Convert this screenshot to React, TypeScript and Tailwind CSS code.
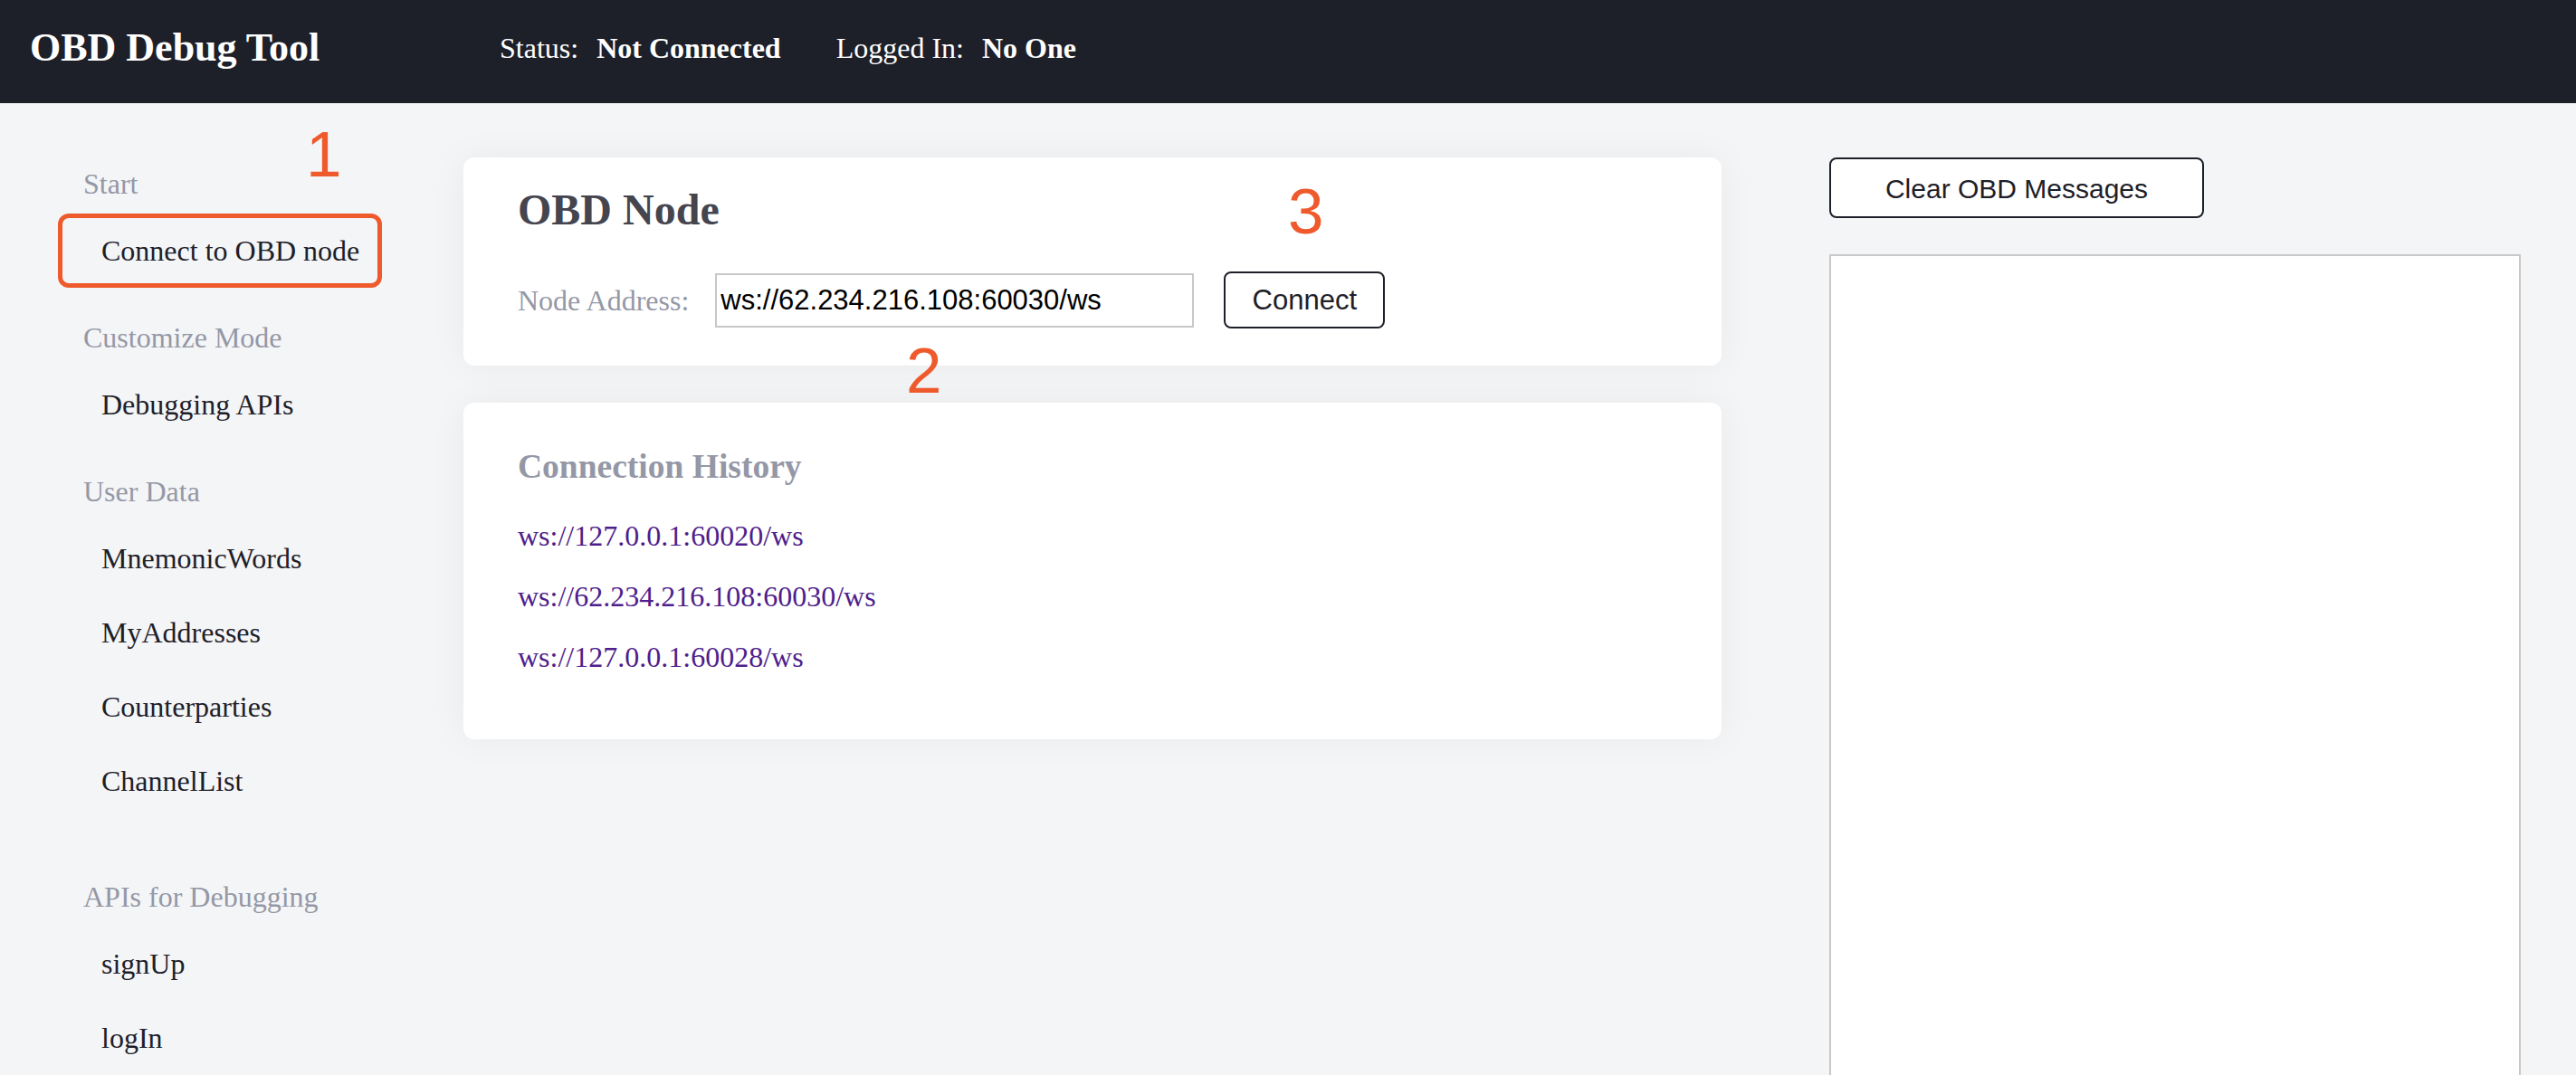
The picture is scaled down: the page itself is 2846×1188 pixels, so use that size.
import React from "react";

type NavGroup = {
    title: string;
    items: string[];
    spaced?: boolean;
};

const groups: NavGroup[] = [
    { title: "Start", items: ["Connect to OBD node"] },
    { title: "Customize Mode", items: ["Debugging APIs"] },
    {
        title: "User Data",
        items: ["MnemonicWords", "MyAddresses", "Counterparties", "ChannelList"],
    },
    { title: "APIs for Debugging", items: ["signUp", "logIn"], spaced: true },
];

const history = [
    "ws://127.0.0.1:60020/ws",
    "ws://62.234.216.108:60030/ws",
    "ws://127.0.0.1:60028/ws",
];

const serif = "font-['Liberation_Serif','Times_New_Roman',serif]";
const sans = "font-['Liberation_Sans',Arial,sans-serif]";

function Marker({ n, className }: { n: string; className: string }) {
    return (
        <span
            className={`pointer-events-none absolute text-[71px] leading-none text-[#ee5a2c] ${sans} ${className}`}
        >
            {n}
        </span>
    );
}

export default function App() {
    return (
        <div className={`relative h-[1188px] overflow-hidden bg-[#f4f5f7] ${serif}`}>
            <header className="flex h-[114px] items-center bg-[#1e2029] pb-[8px] text-white">
                <h1 className="w-[552px] pl-[33px] text-[44px] font-bold">OBD Debug Tool</h1>
                <div className="flex items-center text-[32px]">
                    <span>Status:</span>
                    <span className="ml-[20px] font-bold">Not Connected</span>
                    <span className="ml-[61px]">Logged In:</span>
                    <span className="ml-[20px] font-bold">No One</span>
                </div>
            </header>

            <div className="flex">
                <nav className="relative w-[512px] shrink-0 pl-[64px] pt-[55px]">
                    {groups.map((group, gi) => (
                        <div
                            key={group.title}
                            className={gi === 0 ? "" : group.spaced ? "mt-[53px]" : "mt-[21px]"}
                        >
                            <div className="flex h-[67px] items-center pl-[28px] text-[32px] text-[#9498a6]">
                                {group.title}
                            </div>
                            {group.items.map((item) => (
                                <div
                                    key={item}
                                    className={`flex h-[82px] w-[358px] items-center pl-[48px] text-[32px] text-[#1e2029] ${
                                        item === "Connect to OBD node"
                                            ? "rounded-[12px] ring-[5px] ring-[#ee5a2c] ring-inset"
                                            : ""
                                    }`}
                                >
                                    {item}
                                </div>
                            ))}
                        </div>
                    ))}
                    <Marker n="1" className="left-[338px] top-[21px]" />
                </nav>

                <main className="relative w-[1390px] shrink-0 pt-[60px]">
                    <section className="rounded-[12px] bg-white px-[60px] pt-[34px] pb-[41px] shadow-[0_0_40px_rgba(0,0,0,0.05)]">
                        <h2 className="text-[48px] font-bold leading-none text-[#45454f]">OBD Node</h2>
                        <div className="mt-[44px] flex items-center">
                            <label className="text-[32px] text-[#9498a6]">Node Address:</label>
                            <input
                                readOnly
                                value="ws://62.234.216.108:60030/ws"
                                className={`ml-[29px] h-[60px] w-[529px] border-2 border-[#c8c8c8] bg-white px-[4px] text-[31px] text-black outline-none ${sans}`}
                            />
                            <button
                                className={`ml-[33px] h-[63px] w-[178px] rounded-[8px] border-2 border-[#1e2029] bg-white pt-[2px] text-[31px] text-[#1e2029] ${sans}`}
                            >
                                Connect
                            </button>
                        </div>
                    </section>

                    <section className="mt-[41px] rounded-[12px] bg-white px-[60px] pt-[52px] pb-[57px] shadow-[0_0_40px_rgba(0,0,0,0.05)]">
                        <h3 className="text-[37.5px] font-bold leading-none text-[#9498a6]">
                            Connection History
                        </h3>
                        <ul className="mt-[24px]">
                            {history.map((url) => (
                                <li key={url} className="flex h-[67px] items-center">
                                    <a href="#" className="text-[32px] text-[#4f1e8c]">
                                        {url}
                                    </a>
                                </li>
                            ))}
                        </ul>
                    </section>

                    <Marker n="3" className="left-[911px] top-[84px]" />
                    <Marker n="2" className="left-[489px] top-[260px]" />
                </main>

                <aside className="ml-[119px] flex w-[764px] shrink-0 flex-col pt-[60px]">
                    <button
                        className={`h-[67px] w-[414px] rounded-[8px] border-2 border-[#1e2029] bg-white pt-[2px] text-[30px] text-[#1e2029] ${sans}`}
                    >
                        Clear OBD Messages
                    </button>
                    <div className="mt-[40px] h-[1000px] border-2 border-[#c8c8c8] bg-white" />
                </aside>
            </div>
        </div>
    );
}
